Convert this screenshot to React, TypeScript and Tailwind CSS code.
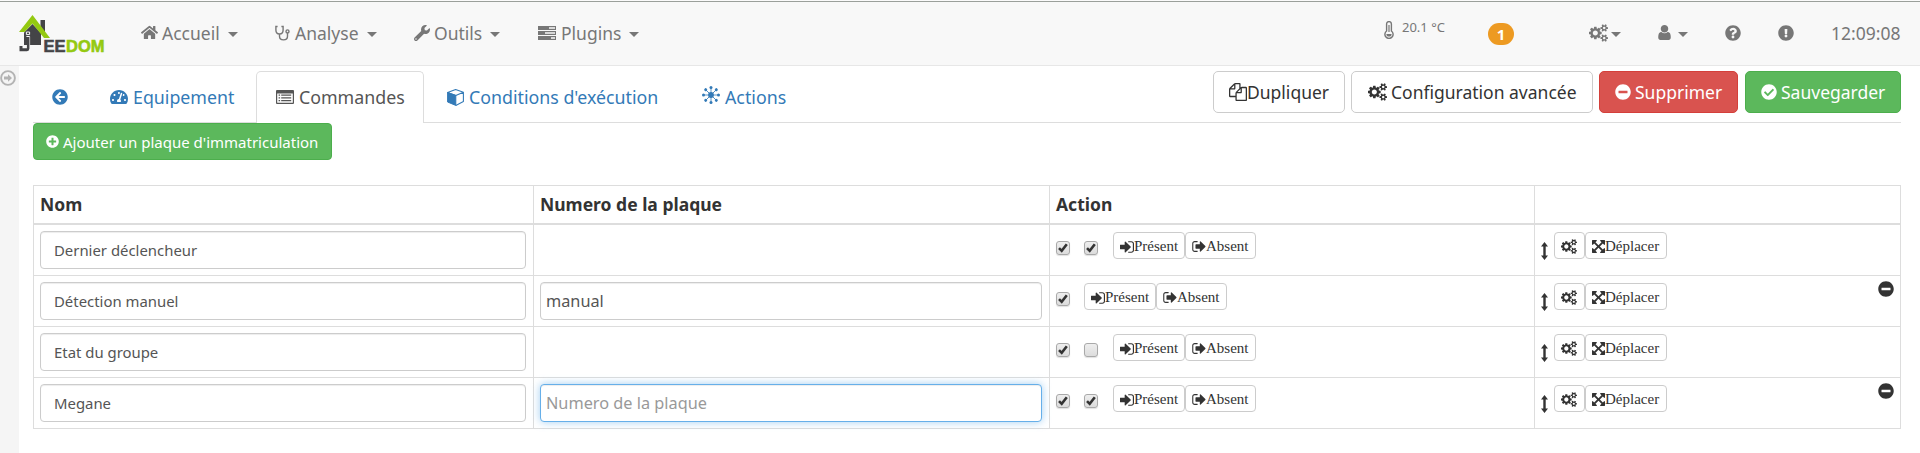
import * as React from "react";
import type { ReactNode } from "react";
import {
  FaArrowCircleLeft,
  FaCheckCircle,
  FaExclamationCircle,
  FaHome,
  FaMinusCircle,
  FaPlusCircle,
  FaQuestionCircle,
  FaTachometerAlt,
  FaWrench,
} from "react-icons/fa";

type IconProps = { className?: string };

const glyph = (d: string, viewBox = "0 0 1792 1792") =>
  function Glyph({ className = "" }: IconProps) {
    return (
      <svg viewBox={viewBox} className={`shrink-0 ${className}`} fill="currentColor">
        <path d={d} />
      </svg>
    );
  };

const SMALL_COG =
  "v140q0 16-149 31-12 27-30 52 51 113 51 138 0 4-4 7-122 71-124 71-8 0-46-47t-52-68q-20 2-30 2t-30-2q-14 21-52 68t-46 47q-2 0-124-71-4-3-4-7 0-25 51-138-18-25-30-52-149-15-149-31v-140q0-16 149-31 13-29 30-52-51-113-51-138 0-4 4-7 4-2 35-20t59-34 30-16q8 0 46 46.5t52 67.5q20-2 30-2t30 2q51-71 92-112l6-2q4 0 124 70 4 3 4 7 0 25-51 138 17 23 30 52 149 15 149 31z";

const Cogs = glyph(
  "M896 896q0-106-75-181t-181-75-181 75-75 181 75 181 181 75 181-75 75-181zm768 512q0-52-38-90t-90-38-90 38-38 90q0 53 37.5 90.5t90.5 37.5 90.5-37.5 37.5-90.5zm0-1024q0-52-38-90t-90-38-90 38-38 90q0 53 37.5 90.5t90.5 37.5 90.5-37.5 37.5-90.5zm-384 421v185q0 10-7 19.5t-16 10.5l-155 24q-11 35-32 76 34 48 90 115 7 11 7 20 0 12-7 19-23 30-82.5 89.5t-78.5 59.5q-11 0-21-7l-115-90q-37 19-77 31-11 108-23 155-7 24-30 24h-186q-11 0-20-7.5t-10-17.5l-23-153q-34-10-75-31l-118 89q-7 7-20 7-11 0-21-8-144-133-144-160 0-9 7-19 10-14 41-53t47-61q-23-44-35-82l-152-24q-10-1-17-9.5t-7-19.5v-185q0-10 7-19.5t16-10.5l155-24q11-35 32-76-34-48-90-115-7-11-7-20 0-12 7-20 22-30 82-89t79-59q11 0 21 7l115 90q34-18 77-32 11-108 23-154 7-24 30-24h186q11 0 20 7.5t10 17.5l23 153q34 10 75 31l118-89q8-7 20-7 11 0 21 8 144 133 144 160 0 8-7 19-12 16-42 54t-45 60q23 48 34 82l152 23q10 2 17 10.5t7 19.5zM1920 1338" +
    SMALL_COG +
    "M1920 314" +
    SMALL_COG,
  "0 0 1920 1792",
);

const SignOut = glyph(
  "M704 1440q0 4 1 20t.5 26.5-3 23.5-10 19.5-20.5 6.5h-320q-119 0-203.5-84.5t-84.5-203.5v-704q0-119 84.5-203.5t203.5-84.5h320q13 0 22.5 9.5t9.5 22.5q0 4 1 20t.5 26.5-3 23.5-10 19.5-20.5 6.5h-320q-66 0-113 47t-47 113v704q0 66 47 113t113 47h312l11.5 1 11.5 3 8 5.5 7 9 2 13.5zm928-544q0 26-19 45l-544 544q-19 19-45 19t-45-19-19-45v-288h-448q-26 0-45-19t-19-45v-384q0-26 19-45t45-19h448v-288q0-26 19-45t45-19 45 19l544 544q19 19 19 45z",
  "64 128 1600 1536",
);

const SignIn = glyph(
  "M1312 896q0 26-19 45l-544 544q-19 19-45 19t-45-19-19-45v-288h-448q-26 0-45-19t-19-45v-384q0-26 19-45t45-19h448v-288q0-26 19-45t45-19 45 19l544 544q19 19 19 45zm352-352v704q0 119-84.5 203.5t-203.5 84.5h-320q-13 0-22.5-9.5t-9.5-22.5q0-4-1-20t-.5-26.5 3-23.5 10-19.5 20.5-6.5h320q66 0 113-47t47-113v-704q0-66-47-113t-113-47h-312q-40-1-40-32q0-4-1-20t-.5-26.5 3-23.5 10-19.5 20.5-6.5h320q119 0 203.5 84.5t84.5 203.5z",
  "128 128 1536 1536",
);

const Files = glyph(
  "M1696 384q40 0 68 28t28 68v1216q0 40-28 68t-68 28h-960q-40 0-68-28t-28-68v-288h-544q-40 0-68-28t-28-68v-672q0-40 20-88t48-76l408-408q28-28 76-48t88-20h416q40 0 68 28t28 68v328q68-40 128-40h416zm-544 213l-299 299h299v-299zm-640-384l-299 299h299v-299zm196 647l316-316v-416h-384v416q0 40-28 68t-68 28h-416v640h512v-256q0-40 20-88t48-76zm956 804v-1152h-384v416q0 40-28 68t-68 28h-416v640h896z",
);

const ArrowsAlt = glyph(
  "M1411 541l-355 355 355 355 144-144q29-31 70-14 39 17 39 59v448q0 26-19 45t-45 19h-448q-42 0-59-40-17-39 14-69l144-144-355-355-355 355 144 144q31 30 14 69-17 40-59 40h-448q-26 0-45-19t-19-45v-448q0-42 40-59 39-17 69 14l144 144 355-355-355-355-144 144q-19 19-45 19-12 0-24-5-40-17-40-59v-448q0-26 19-45t45-19h448q42 0 59 40 17 39-14 69l-144 144 355 355 355-355-144-144q-31-30-14-69 17-40 59-40h448q26 0 45 19t19 45v448q0 42-39 59-13 5-25 5-26 0-45-19z",
  "128 128 1536 1536",
);

const User = glyph(
  "M1536 1399q0 109-62.5 187t-150.5 78h-854q-88 0-150.5-78t-62.5-187q0-85 8.5-160.5t31.5-152 58.5-131 94-89 134.5-34.5q131 128 313 128t313-128q76 0 134.5 34.5t94 89 58.5 131 31.5 152 8.5 160.5zm-256-887q0 159-112.5 271.5t-271.5 112.5-271.5-112.5-112.5-271.5 112.5-271.5 271.5-112.5 271.5 112.5 112.5 271.5z",
  "256 128 1280 1536",
);

const ArrowsV = glyph("M3.5 0L7 4.400H4.700v9.200H7L3.500 18 0 13.600h2.300V4.400H0z", "0 0 7 18");

function Stethoscope({ className = "" }: IconProps) {
  return (
    <svg viewBox="0 0 15 16" className={className} fill="none" stroke="currentColor" strokeWidth="1.4">
      <path d="M2.6 1.5H.9V5c0 2.7 1.6 4 3.6 4s3.6-1.3 3.6-4V1.5H6.4M4.5 9v2.2c0 2.5 1.8 3.7 4 3.7s4-1.2 4-3.7V8" />
      <circle cx="12.5" cy="6.4" r="1.5" />
    </svg>
  );
}

function Tasks({ className = "" }: IconProps) {
  return (
    <svg viewBox="0 0 18 14" className={className} fill="currentColor">
      <path fillRule="evenodd" d="M0 0h18v4H0zM11 1.2v1.6h6V1.2zM0 5h18v4H0zM7 6.2v1.6h10V6.2zM0 10h18v4H0zM13 11.2v1.6h4v-1.6z" />
    </svg>
  );
}

function ListBox({ className = "" }: IconProps) {
  return (
    <svg viewBox="0 0 18 14" className={className} fill="currentColor">
      <path
        fillRule="evenodd"
        d="M1 0h16a1 1 0 0 1 1 1v12a1 1 0 0 1-1 1H1a1 1 0 0 1-1-1V1a1 1 0 0 1 1-1zM1.2 3.4v9.4h15.6V3.4z"
      />
      <path d="M2.6 4.6h1.5v1.2H2.6zM5.2 4.6h10v1.2h-10zM2.6 7.3h1.5v1.2H2.6zM5.2 7.3h10v1.2h-10zM2.6 10h1.5v1.2H2.6zM5.2 10h10v1.2h-10z" />
    </svg>
  );
}

function Cube({ className = "" }: IconProps) {
  return (
    <svg viewBox="0 0 17 17" className={className} fill="currentColor" stroke="currentColor" strokeLinejoin="round">
      <path d="M.6 3.6L8.8 6.4v10L.6 13z" />
      <path d="M.6 3.6L8.6.6l7.8 2.6-7.6 3.2zM16.4 3.2v9.4l-7.6 3.8" fill="none" strokeWidth="1.1" />
    </svg>
  );
}

const RAYS = [0, 45, 90, 135, 180, 225, 270, 315];

function Hub({ className = "" }: IconProps) {
  return (
    <svg viewBox="0 0 18 18" className={className} fill="currentColor" stroke="currentColor">
      <circle cx="9" cy="9" r="2.9" stroke="none" />
      {RAYS.map((angle) => (
        <g key={angle} transform={`rotate(${angle} 9 9)`}>
          <path d="M9 9V2" strokeWidth="0.8" />
          <circle cx="9" cy="1.5" r="1.5" stroke="none" />
        </g>
      ))}
    </svg>
  );
}

function Thermometer({ className = "" }: IconProps) {
  return (
    <svg viewBox="0 0 10 18" className={className} fill="none" stroke="currentColor" strokeWidth="1.4">
      <path d="M2.6 10V3a2.4 2.4 0 0 1 4.8 0v7a4.1 4.1 0 1 1-4.8 0z" />
      <path d="M5 4v7" strokeWidth="1.2" />
      <path d="M2.4 13h5.2a2.6 2.6 0 0 1-5.2 0z" fill="currentColor" stroke="none" />
    </svg>
  );
}

function SidebarArrow({ className = "" }: IconProps) {
  return (
    <svg viewBox="0 0 16 16" className={className} fill="none" stroke="currentColor" strokeWidth="1.9">
      <circle cx="8" cy="8" r="6.9" />
      <path d="M4 6.6h4V4.2L12 8l-4 3.8V9.4H4z" fill="currentColor" stroke="none" />
    </svg>
  );
}

function Caret({ className = "" }: IconProps) {
  return (
    <svg viewBox="0 0 10 5" className={`h-[5px] w-[10px] shrink-0 ${className}`} fill="currentColor">
      <path d="M0 0h10L5 5z" />
    </svg>
  );
}

function Logo() {
  return (
    <svg viewBox="0 0 87 40" className="mt-[14px] h-[40px] w-[87px]">
      <path d="M21.500 6H26v14l-4.500-5z" fill="#444447" />
      <path d="M5 18.500l8.500-8.500 8.500 9V31H5z" fill="#444447" />
      <path d="M0 18L13.500 1 31 24h-6L13.500 9.500 5.500 18z" fill="#94c911" />
      <path d="M7.400 18h3.200v2.600H7.400zM7.400 22.500h3.200V31" fill="none" stroke="#f8f8f8" strokeWidth="1" />
      <path d="M7.900 23h2.500v11.800q0 2.400-2.400 2.400H.500v-5.200h3v2.200h4.400z" fill="#444447" />
      <text x="24.500" y="37.700" fontFamily="Liberation Sans, sans-serif" fontWeight="700" fontSize="16.500" textLength="22" lengthAdjust="spacingAndGlyphs" fill="#444447" stroke="#444447" strokeWidth="0.600">
        EE
      </text>
      <text x="47" y="37.700" fontFamily="Liberation Sans, sans-serif" fontWeight="700" fontSize="16.500" textLength="38.500" lengthAdjust="spacingAndGlyphs" fill="#94c911" stroke="#94c911" strokeWidth="0.600">
        DOM
      </text>
    </svg>
  );
}

function NavItem({ icon, label, className }: { icon: ReactNode; label: string; className: string }) {
  return (
    <a className={`flex h-[51px] shrink-0 items-center ${className}`}>
      {icon}
      <span>{label}</span>
      <Caret className="mt-[3px] ml-[8px]" />
    </a>
  );
}

function Header() {
  return (
    <header className="flex h-[66px] border-t border-b border-t-[#fbfbfb] border-b-[#e7e7e7] bg-[#f8f8f8] text-[#777]">
      <div className="flex w-full border-t border-[#9ba09b]">
        <div className="-mt-[2px] w-[141px] shrink-0 pl-[19px]">
          <Logo />
        </div>
        <nav className="flex pt-[5px]">
          <NavItem className="w-[134px]" icon={<FaHome className="mr-[4px] size-[17px]" />} label="Accueil" />
          <NavItem className="w-[139px]" icon={<Stethoscope className="mr-[5px] h-[16px] w-[15px]" />} label="Analyse" />
          <NavItem className="w-[124px]" icon={<FaWrench className="mr-[4px] size-[16px]" />} label="Outils" />
          <NavItem className="w-[110px]" icon={<Tasks className="mr-[5px] h-[14px] w-[18px]" />} label="Plugins" />
        </nav>
        <div className="ml-auto flex h-[51px] items-center pt-[10px]">
          <Thermometer className="-mt-[5px] h-[18px] w-[10px]" />
          <span className="-mt-[11px] ml-[8px] w-[86px] text-[13px]">20.1 °C</span>
          <span className="mt-[3px] mr-[75px] flex h-[22px] w-[26px] items-center justify-center rounded-[11px] bg-[#ed9a22] text-[15px] font-bold text-white">
            1
          </span>
          <Cogs className="mr-[3px] h-[18px] w-[19px]" />
          <Caret className="mt-[3px] mr-[37px]" />
          <User className="mr-[7px] h-[15px] w-[13px]" />
          <Caret className="mt-[3px] mr-[37px]" />
          <FaQuestionCircle className="mr-[37px] size-[16px]" />
          <FaExclamationCircle className="mr-[37px] size-[16px]" />
          <span className="w-[89px]">12:09:08</span>
        </div>
      </div>
    </header>
  );
}

function Tab({ icon, label, className }: { icon: ReactNode; label?: string; className: string }) {
  return (
    <a className={`flex h-[52px] shrink-0 items-center ${className}`}>
      {icon}
      {label}
    </a>
  );
}

function Toolbar() {
  const base = "flex h-[42px] shrink-0 items-center rounded-[5px] border pb-px";
  return (
    <div className="flex h-[52px] w-[1868px] border-b border-[#ddd]">
      <div className="flex text-[17.800px] text-[#337ab7]">
        <Tab className="w-[77px] pl-[19px]" icon={<FaArrowCircleLeft className="size-[16px]" />} />
        <Tab className="w-[146px]" icon={<FaTachometerAlt className="mr-[5px] size-[18px]" />} label="Equipement" />
        <Tab
          className="w-[168px] rounded-t-[5px] border border-b-0 border-[#ddd] bg-white pb-px pl-[19px] text-[#555]"
          icon={<ListBox className="mr-[5px] h-[14px] w-[18px]" />}
          label="Commandes"
        />
        <Tab className="ml-[23px] w-[255px]" icon={<Cube className="mr-[5px] size-[17px]" />} label="Conditions d'exécution" />
        <Tab className="" icon={<Hub className="-mt-[4px] mr-[5px] size-[18px]" />} label="Actions" />
      </div>
      <div className="ml-auto flex text-[#333]">
        <button className={`${base} mr-[6px] w-[132px] border-[#ccc] bg-white pl-[15px]`}>
          <Files className="size-[18px]" />
          Dupliquer
        </button>
        <button className={`${base} mr-[6px] w-[242px] border-[#ccc] bg-white pl-[16px]`}>
          <Cogs className="mr-[4px] h-[18px] w-[19px]" />
          Configuration avancée
        </button>
        <button className={`${base} mr-[7px] w-[139px] border-[#d43f3a] bg-[#d9534f] pl-[15px] text-white`}>
          <FaMinusCircle className="mr-[4px] size-[16px]" />
          Supprimer
        </button>
        <button className={`${base} w-[156px] border-[#4cae4c] bg-[#5cb85c] pl-[15px] text-white`}>
          <FaCheckCircle className="mr-[4px] size-[16px]" />
          Sauvegarder
        </button>
      </div>
    </div>
  );
}

function Check({ on }: { on: boolean }) {
  return (
    <span className="mt-[9px] mr-[14px] flex size-[14px] shrink-0 items-center justify-center rounded-[3px] border border-[#a9a9a9] bg-linear-to-b from-[#eee] to-[#dcdcdc] shadow-[0_1px_1px_rgba(0,0,0,0.12)]">
      {on && (
        <svg viewBox="0 0 10 10" className="size-[10px]" fill="none" stroke="#333" strokeWidth="2.600">
          <path d="M1 5.200l2.700 2.700L8.800 1.300" />
        </svg>
      )}
    </span>
  );
}

function SmallButton({ className, children }: { className: string; children: ReactNode }) {
  return (
    <button
      className={`flex h-[27px] shrink-0 items-center rounded-[4px] border border-[#ccc] bg-white pt-[2px] pl-[6px] font-['Liberation_Serif',serif] text-[15px] leading-none text-[#333] ${className}`}
    >
      {children}
    </button>
  );
}

type Command = { name: string; plate?: string; focused?: boolean; checks: boolean[]; removable?: boolean };

const COMMANDS: Command[] = [
  { name: "Dernier déclencheur", checks: [true, true] },
  { name: "Détection manuel", plate: "manual", checks: [true], removable: true },
  { name: "Etat du groupe", checks: [true, false] },
  { name: "Megane", plate: "", focused: true, checks: [true, true], removable: true },
];

const FIELD = "block h-[38px] w-full rounded-[4px] border bg-white pb-px outline-none";

function Row({ command }: { command: Command }) {
  const { name, plate, focused, checks, removable } = command;
  return (
    <div className="grid h-[51px] grid-cols-[500px_516px_485px_366px] border-b border-[#ddd] *:border-r *:border-[#ddd]">
      <div className="pt-[6px] pr-[7px] pl-[6px]">
        <input
          readOnly
          value={name}
          className={`${FIELD} border-[#ccc] px-[13px] text-[14.900px] text-[#555] shadow-[inset_0_1px_1px_rgba(0,0,0,0.075)]`}
        />
      </div>
      <div className="pt-[6px] pr-[7px] pl-[6px]">
        {plate !== undefined && (
          <input
            readOnly
            value={plate}
            placeholder="Numero de la plaque"
            className={`${FIELD} px-[5px] text-[16.300px] text-[#555] placeholder:text-[#999] ${
              focused
                ? "border-[#66afe9] shadow-[inset_0_1px_1px_rgba(0,0,0,0.075),0_0_8px_rgba(102,175,233,0.6)]"
                : "border-[#ccc] shadow-[inset_0_1px_1px_rgba(0,0,0,0.075)]"
            }`}
          />
        )}
      </div>
      <div className="flex items-start pt-[7px] pl-[6px]">
        {checks.map((on, i) => (
          <Check key={i} on={on} />
        ))}
        <SmallButton className={checks.length > 1 ? "ml-px w-[72px]" : "w-[72px]"}>
          <SignIn className="size-[14px]" />
          Présent
        </SmallButton>
        <SmallButton className="w-[71px]">
          <SignOut className="h-[13px] w-[14px]" />
          Absent
        </SmallButton>
      </div>
      <div className="flex items-start pt-[7px] pl-[6px] text-[#333]">
        <ArrowsV className="mt-[10px] mr-[6px] h-[18px] w-[7px]" />
        <SmallButton className="w-[31px]">
          <Cogs className="h-[15px] w-[16px]" />
        </SmallButton>
        <SmallButton className="w-[82px]">
          <ArrowsAlt className="size-[13px]" />
          Déplacer
        </SmallButton>
        {removable && <FaMinusCircle className="-mt-[2px] mr-[6px] ml-auto size-[16px]" />}
      </div>
    </div>
  );
}

export default function App() {
  return (
    <div className="flex h-[453px] w-[1920px] flex-col overflow-hidden bg-white font-['Noto_Sans','Open_Sans',sans-serif] text-[17.500px] leading-[24px] whitespace-nowrap text-[#333]">
      <Header />
      <div className="flex flex-1">
        <aside className="w-[19px] shrink-0 bg-[#f5f5f5] pt-[4px]">
          <SidebarArrow className="size-[16px] text-[#b3b3b3]" />
        </aside>
        <main className="flex flex-1 flex-col items-start pt-[5px] pl-[14px]">
          <Toolbar />
          <button className="flex h-[37px] w-[299px] items-center rounded-[4px] border border-[#4cae4c] bg-[#5cb85c] pl-[12px] text-[15px] text-white">
            <FaPlusCircle className="mr-[4px] size-[13px]" />
            Ajouter un plaque d'immatriculation
          </button>
          <section className="mt-[25px] w-[1868px] border-t border-l border-[#ddd]">
            <div className="grid h-[39px] grid-cols-[500px_516px_485px_366px] border-b-2 border-[#ddd] font-bold *:border-r *:border-[#ddd] *:pt-[6px] *:pl-[6px]">
              <div>Nom</div>
              <div>Numero de la plaque</div>
              <div>Action</div>
              <div />
            </div>
            {COMMANDS.map((command) => (
              <Row key={command.name} command={command} />
            ))}
          </section>
        </main>
      </div>
    </div>
  );
}
